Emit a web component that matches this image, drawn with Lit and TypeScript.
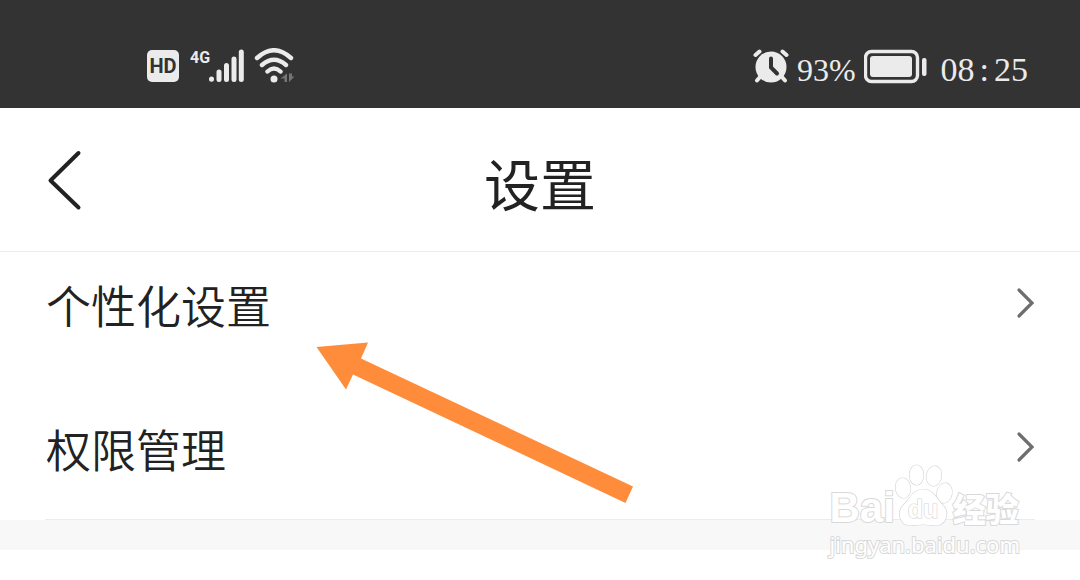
import { LitElement, html, css } from "lit";
import { customElement, property } from "lit/decorators.js";

@customElement("status-bar")
class StatusBar extends LitElement {
  static styles = css`
    :host {
      display: flex;
      justify-content: space-between;
      align-items: flex-start;
      box-sizing: border-box;
      height: 108px;
      padding: 48px 52px 0 147px;
      background: #333333;
      color: #ebebeb;
    }
    .group {
      display: flex;
      height: 36px;
      align-items: center;
    }
    .network {
      display: flex;
      margin: 0 10px 0 11px;
    }
    .gen {
      font: bold 16px/20px "Roboto", sans-serif;
      width: 18px;
      height: 36px;
    }
    .hd {
      display: flex;
      align-items: center;
      justify-content: center;
      width: 32px;
      height: 32px;
      border-radius: 5px;
      background: #ebebeb;
      color: #333333;
      font: bold 20px/32px "Roboto", sans-serif;
    }
    .num {
      font: 34px/36px "Liberation Serif", serif;
      padding-top: 8px;
    }
    .charge {
      font-size: 32px;
    }
    .battery {
      margin: 0 13px 0 8px;
    }
    .alarm {
      margin-right: 8px;
    }
    .time {
      display: flex;
      gap: 5px;
    }
    svg {
      display: block;
    }
  `;

  render() {
    return html`
      <div class="group">
        <span class="hd">HD</span>
        <span class="network">
          <span class="gen">4G</span>
          <svg width="36" height="36" viewBox="0 0 36 36" stroke="#ebebeb" stroke-width="5" stroke-linecap="round">
            <path d="M3.500 31v.2M11 24v7.500M18.500 17.500v14M26 11v20.500M33.300 4v27.500" />
          </svg>
        </span>
        <svg width="42" height="36" viewBox="0 0 42 36" fill="none" stroke="#ebebeb" stroke-width="4.400" stroke-linecap="round">
          <path d="M3 10Q20 -5.500 37 10M8 17Q20 6.500 32 17M13.500 23.500Q20 17.500 26.500 23.500" />
          <circle cx="20" cy="31" r="3.500" fill="#ebebeb" stroke="none" />
          <path d="M33 25.500v8.500h-2.500v-3.500h-4zM35 25.500v8.500l5.500-5.500h-2.500v-3z" fill="#757575" stroke="none" />
        </svg>
      </div>
      <div class="group">
        <svg class="alarm" width="36" height="36" viewBox="0 0 36 36" fill="none" stroke-linecap="round">
          <circle cx="18" cy="19" r="15.500" fill="#ebebeb" />
          <path d="M2.500 7l4-3.500M33.500 7l-4-3.500M7 29l-3 3.500M29 29l3 3.500" stroke="#ebebeb" stroke-width="4" />
          <path d="M18 10.500v9l6 6" stroke="#333333" stroke-width="4" />
        </svg>
        <span class="num charge">93%</span>
        <svg class="battery" width="64" height="36" viewBox="0 0 64 36">
          <rect x="1.500" y="3.500" width="52" height="30" rx="6" fill="none" stroke="#ebebeb" stroke-width="3.400" />
          <rect x="6" y="8" width="42" height="21" rx="3" fill="#ebebeb" />
          <rect x="58" y="10" width="4.500" height="18" rx="2" fill="#ebebeb" />
        </svg>
        <span class="num time"><span>08</span><span>:</span><span>25</span></span>
      </div>
    `;
  }
}

@customElement("settings-row")
class SettingsRow extends LitElement {
  @property() label = "";

  static styles = css`
    :host {
      display: block;
    }
    .row {
      display: flex;
      width: 100%;
      height: 102px;
      padding: 0 45px 0 46px;
      border: 0;
      background: none;
      align-items: center;
      justify-content: space-between;
      text-align: left;
      color: #222222;
      font: 350 45px/56px "Noto Sans CJK SC", sans-serif;
      cursor: pointer;
    }
    .label {
      padding-top: 4px;
    }
  `;

  render() {
    return html`
      <button class="row" type="button">
        <span class="label">${this.label}</span>
        <svg width="20" height="32" viewBox="0 0 20 32" fill="none" stroke="#6e6e6e" stroke-width="3.200" stroke-linecap="round">
          <path d="M4 3l13 13L4 29" />
        </svg>
      </button>
    `;
  }
}

@customElement("site-mark")
class SiteMark extends LitElement {
  static styles = css`
    :host {
      display: block;
      color: #ffffff;
      -webkit-text-stroke: 2px #d9d9d9;
      paint-order: stroke fill;
    }
    .brand {
      display: flex;
      align-items: flex-end;
      height: 64px;
    }
    .latin {
      font: bold 42px/40px "Liberation Sans", sans-serif;
    }
    .han {
      font: 900 33px/40px "Noto Sans CJK SC", sans-serif;
    }
    .site {
      font: 22px/32px "Noto Sans", sans-serif;
    }
    .paw {
      display: block;
      overflow: visible;
    }
    .du {
      font: bold 25px "Liberation Sans", sans-serif;
    }
  `;

  render() {
    return html`
      <div class="brand">
        <span class="latin">Bai</span>
        <svg class="paw" width="58" height="64" viewBox="0 0 58 64" fill="#ffffff" stroke="#d4d4d4" stroke-width="1.200">
          <ellipse cx="8" cy="24" rx="7.500" ry="10" transform="rotate(-8 8 24)" />
          <ellipse cx="21.500" cy="11" rx="7" ry="10" />
          <ellipse cx="39" cy="12" rx="7.500" ry="10" transform="rotate(10 39 12)" />
          <ellipse cx="49.500" cy="29" rx="7.500" ry="10" transform="rotate(10 49.500 29)" />
          <path d="M28 25.500c-11 0-13 10-19 15c-8 7-4 21 6 21c5 0 8-1 13-1s8 1 13 1c10 0 14-13 7-20c-6-6-9-16-20-16z" />
          <text class="du" x="28" y="54" text-anchor="middle">du</text>
        </svg>
        <span class="han">经验</span>
      </div>
      <div class="site">jingyan.baidu.com</div>
    `;
  }
}

@customElement("app-root")
class AppRoot extends LitElement {
  static styles = css`
    :host {
      display: block;
      position: relative;
      min-height: 100vh;
      overflow: hidden;
      background: #ffffff;
    }
    .header {
      display: grid;
      grid-template-columns: 1fr auto 1fr;
      align-items: center;
      height: 143px;
      padding: 0 40px;
      border-bottom: 1px solid #ececec;
    }
    .back {
      justify-self: start;
      padding: 0;
      border: 0;
      background: none;
      cursor: pointer;
    }
    .back svg {
      display: block;
    }
    .title {
      margin: 0;
      padding-top: 4px;
      color: #222222;
      font: 400 56px/72px "Noto Sans CJK SC", sans-serif;
    }
    .list {
      display: flex;
      flex-direction: column;
      gap: 42px;
      padding-bottom: 21px;
    }
    .rule {
      height: 1px;
      margin: 0 45px;
      background: #ececec;
    }
    .band {
      height: 30px;
      background: #f8f8f8;
    }
    .arrow {
      position: absolute;
      left: 316px;
      top: 342px;
      pointer-events: none;
    }
    .mark {
      position: absolute;
      right: 60px;
      top: 464px;
      pointer-events: none;
    }
  `;

  render() {
    return html`
      <status-bar></status-bar>
      <header class="header">
        <button class="back" type="button" aria-label="返回">
          <svg width="48" height="64" viewBox="0 0 48 64" fill="none" stroke="#222222" stroke-width="4" stroke-linecap="round" stroke-linejoin="round">
            <path d="M38.500 5L10.500 32.500L38.500 59.500" />
          </svg>
        </button>
        <h1 class="title">设置</h1>
      </header>
      <main>
        <div class="list">
          <settings-row label="个性化设置"></settings-row>
          <settings-row label="权限管理"></settings-row>
        </div>
        <div class="rule"></div>
        <div class="band"></div>
      </main>
      <svg class="arrow" width="318" height="162" viewBox="0 0 318 162" fill="#ff8c3a">
        <path d="M0.500 5L52 0.500L45 16.500L317 144.500L309.500 161L37 32.500L30 47.500Z" />
      </svg>
      <site-mark class="mark"></site-mark>
    `;
  }
}
